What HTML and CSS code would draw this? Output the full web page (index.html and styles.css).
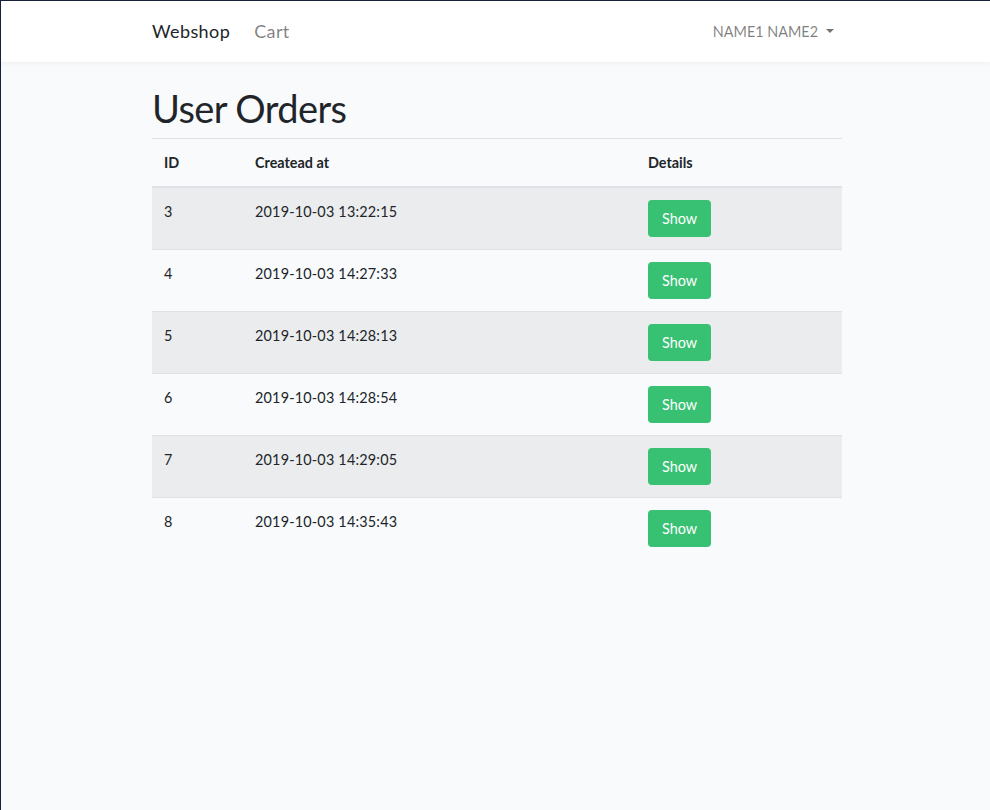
FILE: index.html
```html
<!DOCTYPE html>
<html>
<head>
<meta charset="utf-8">
<link rel="stylesheet" href="styles.css">
</head>
<body>
<nav class="navbar">
  <div class="container nav-inner">
    <div class="nav-left">
      <a class="brand">Webshop</a>
      <a class="nav-link">Cart</a>
    </div>
    <a class="user">NAME1 NAME2 <span class="caret"></span></a>
  </div>
</nav>
<main class="main">
  <div class="container">
    <h1 class="title">User Orders</h1>
    <table class="orders">
      <thead>
        <tr><th class="c-id">ID</th><th class="c-date">Createad at</th><th class="c-det">Details</th></tr>
      </thead>
      <tbody>
        <tr><td>3</td><td>2019-10-03 13:22:15</td><td><a class="btn">Show</a></td></tr>
        <tr><td>4</td><td>2019-10-03 14:27:33</td><td><a class="btn">Show</a></td></tr>
        <tr><td>5</td><td>2019-10-03 14:28:13</td><td><a class="btn">Show</a></td></tr>
        <tr><td>6</td><td>2019-10-03 14:28:54</td><td><a class="btn">Show</a></td></tr>
        <tr><td>7</td><td>2019-10-03 14:29:05</td><td><a class="btn">Show</a></td></tr>
        <tr><td>8</td><td>2019-10-03 14:35:43</td><td><a class="btn">Show</a></td></tr>
      </tbody>
    </table>
  </div>
</main>
</body>
</html>
```
FILE: styles.css
```css
html, body { margin: 0; padding: 0; }
body {
  box-sizing: border-box;
  min-height: 810px;
  border-top: 1px solid #16223a;
  border-left: 1px solid #16223a;
  background: #f8fafc;
  font-family: Lato, "Noto Sans", sans-serif;
  font-size: 14.4px;
  line-height: 1.6;
  color: #212529;
}
.container { width: 690px; margin-left: 151px; }
.navbar {
  background: #fff;
  height: 61px;
  box-shadow: 0 2px 4px rgba(0,0,0,.04);
  position: relative;
}
.nav-inner {
  height: 61px;
  display: flex;
  align-items: center;
  justify-content: space-between;
}
.nav-left { display: flex; align-items: center; gap: 24px; }
.brand { font-size: 18px; color: #212529; letter-spacing: 0.4px; }
.nav-link { font-size: 18px; color: rgba(0,0,0,.5); letter-spacing: 0.4px; }
.user {
  color: rgba(0,0,0,.5);
  display: flex;
  align-items: center;
  margin-right: 8px;
}
.caret {
  display: inline-block;
  width: 0; height: 0;
  margin-left: 8px;
  border-top: 4.5px solid rgba(0,0,0,.55);
  border-left: 4px solid transparent;
  border-right: 4px solid transparent;
}
.main { padding-top: 26px; }
.title {
  margin: 0 0 10px;
  font-size: 38px;
  line-height: 40px;
  font-weight: 400;
  letter-spacing: -0.6px;
}
.orders {
  width: 690px;
  border-collapse: collapse;
}
.orders th, .orders td {
  text-align: left;
  vertical-align: top;
  padding: 12px 12px;
  line-height: 23px;
}
.orders td { letter-spacing: 0.2px; }
.orders th {
  font-weight: 700;
  border-top: 1px solid #dee2e6;
  border-bottom: 2px solid #dee2e6;
}
.c-id { width: 67px; }
.c-date { width: 369px; }
.orders tbody tr + tr td { border-top: 1px solid #dee2e6; }
.orders tbody tr:nth-child(odd) { background: #ebecee; }
.btn {
  display: inline-block;
  background: #38c172;
  color: #fff;
  border-radius: 4px;
  padding: 7px 12px;
  line-height: 23px;
  width: 39px;
  text-align: center;
  letter-spacing: 0;
}
```
